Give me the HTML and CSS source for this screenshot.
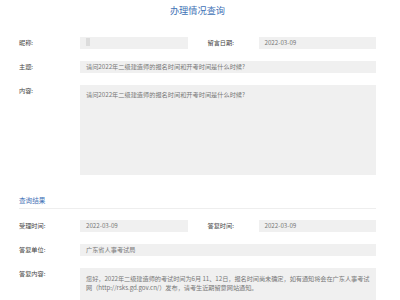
FILE: index.html
```html
<!DOCTYPE html>
<html lang="zh-CN">
<head>
<meta charset="utf-8">
<title>办理情况查询</title>
<link rel="stylesheet" href="styles.css">
</head>
<body>
<div class="page">
  <h1 class="title">办理情况查询</h1>
  <div class="form">
    <div class="label">昵称:</div>
    <div class="field"><span class="masked"></span></div>
    <div class="label label-right">留言日期:</div>
    <div class="field">2022-03-09</div>

    <div class="label">主题:</div>
    <div class="field wide">请问2022年二级建造师的报名时间和开考时间是什么时候?</div>

    <div class="label">内容:</div>
    <div class="field wide area">请问2022年二级建造师的报名时间和开考时间是什么时候?</div>
  </div>

  <div class="section-title">查询结果</div>

  <div class="form">
    <div class="label">受理时间:</div>
    <div class="field">2022-03-09</div>
    <div class="label label-right">答复时间:</div>
    <div class="field">2022-03-09</div>

    <div class="label">答复单位:</div>
    <div class="field wide">广东省人事考试局</div>

    <div class="label">答复内容:</div>
    <div class="field wide area answer">您好，2022年二级建造师的考试时间为6月 11、12日，报名时间尚未确定，如有通知将会在广东人事考试网（http://rsks.gd.gov.cn/）发布，请考生近期留意网站通知。</div>
  </div>
</div>
</body>
</html>
```

FILE: styles.css
```css
* {
  box-sizing: border-box;
}

body {
  margin: 0;
  background: #ffffff;
  font-family: "Noto Sans CJK SC", "Noto Sans", "Liberation Sans", sans-serif;
  color: #333333;
}

.page {
  width: 357px;
  margin-left: 19px;
}

.title {
  margin: 0 0 17px 0;
  font-size: 9.2px;
  font-weight: normal;
  line-height: 20px;
  text-align: center;
  color: #3f72b6;
}

.form {
  display: grid;
  grid-template-columns: 61px 1fr 61px 1fr;
  column-gap: 0;
  row-gap: 12px;
}

.label {
  font-size: 6.2px;
  line-height: 12px;
  color: #444444;
  align-self: start;
}

.label-right {
  margin-left: 10px;
  width: 61px;
}

.form > .field:nth-child(2) {
  margin-right: 10px;
}

.field {
  background: #f0f0f0;
  height: 12px;
  font-size: 6.2px;
  line-height: 12px;
  padding-left: 6px;
  color: #777777;
  white-space: nowrap;
  overflow: hidden;
}

.wide {
  grid-column: 2 / 5;
}

.area {
  height: 90px;
  padding-top: 5px;
  line-height: 9px;
  white-space: normal;
}

.answer {
  height: 50px;
  padding-top: 6px;
  padding-right: 1px;
  letter-spacing: -0.05px;
}

.masked {
  display: inline-block;
  width: 4px;
  height: 8px;
  background: #dcdcdc;
  vertical-align: middle;
  margin-top: -2px;
}

.section-title {
  margin-top: 20px;
  margin-bottom: 11px;
  padding-bottom: 3px;
  border-bottom: 1px solid #eeeeee;
  font-size: 6.6px;
  line-height: 10px;
  color: #3f72b6;
}
```
